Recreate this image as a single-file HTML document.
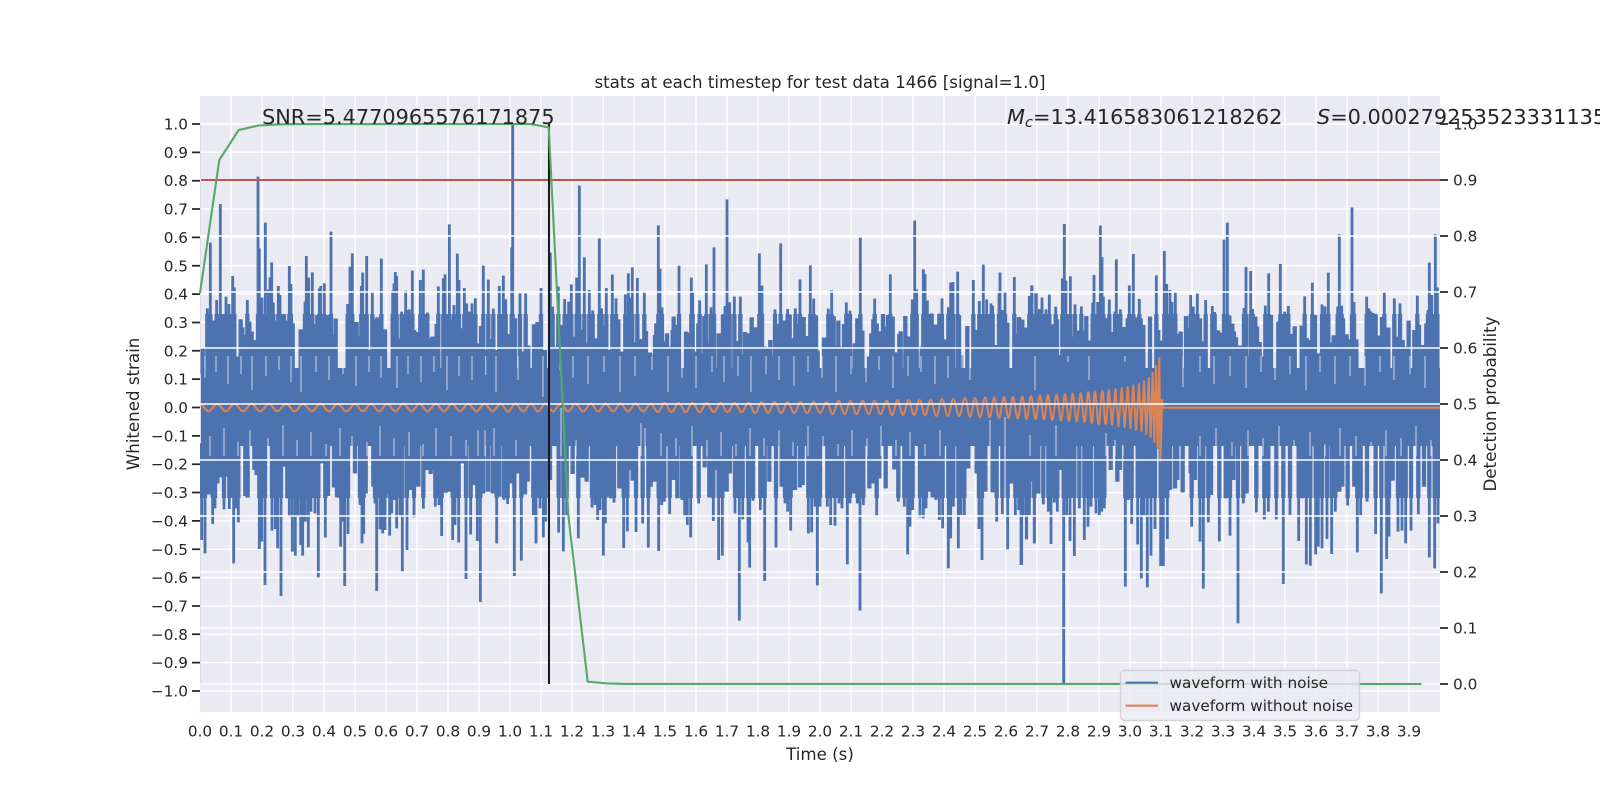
<!DOCTYPE html>
<html><head><meta charset="utf-8"><title>stats</title>
<style>
html,body{margin:0;padding:0;background:#fff;width:1600px;height:800px;overflow:hidden}
svg{display:block}
text{font-family:"DejaVu Sans","Liberation Sans",sans-serif;fill:#262626}
.t{font-size:15.28px}
.l{font-size:16.67px}
.b{font-size:20.83px}
.x text{text-anchor:middle}
.y text{text-anchor:end}
</style></head><body>
<svg width="1600" height="800" viewBox="0 0 1600 800" xmlns="http://www.w3.org/2000/svg">
<defs><clipPath id="c"><rect x="200" y="314" width="1240" height="60"/><rect x="200" y="442" width="1240" height="56"/></clipPath></defs>
<rect width="1600" height="800" fill="#fff"/>
<rect x="200" y="96" width="1240" height="616" fill="#eaeaf2"/>
<path fill="none" stroke="#fff" stroke-width="1.39" d="M231 96V712M262 96V712M293 96V712M324 96V712M355 96V712M386 96V712M417 96V712M448 96V712M479 96V712M510 96V712M541 96V712M572 96V712M603 96V712M634 96V712M665 96V712M696 96V712M727 96V712M758 96V712M789 96V712M820 96V712M851 96V712M882 96V712M913 96V712M944 96V712M975 96V712M1006 96V712M1037 96V712M1068 96V712M1099 96V712M1130 96V712M1161 96V712M1192 96V712M1223 96V712M1254 96V712M1285 96V712M1316 96V712M1347 96V712M1378 96V712M1409 96V712"/>
<path fill="none" stroke="#fff" stroke-width="1.39" d="M200 124H1440M200 152.35H1440M200 180.7H1440M200 209.05H1440M200 237.4H1440M200 265.75H1440M200 294.1H1440M200 322.45H1440M200 350.8H1440M200 379.15H1440M200 407.5H1440M200 435.85H1440M200 464.2H1440M200 492.55H1440M200 520.9H1440M200 549.25H1440M200 577.6H1440M200 605.95H1440M200 634.3H1440M200 662.65H1440M200 691H1440"/>
<rect x="200" y="124" width="1" height="560" fill="#dcdce6"/>
<!-- blue waveform -->
<rect x="201" y="368" width="1239" height="78" fill="#4c72b0"/>
<g fill="none" stroke="#4c72b0">
<g stroke-width="8.5">
<g id="wf">
<g transform="translate(200,130) scale(.33333)">
<path d="M8 730V655M22 730V535M31 730V338M42 730V572M50 730V510M61 730V222M68 730V552M78 730V500M87 730V522M98 730V438M103 730V472M110 730V680M122 730V568M127 730V592M133 730V615M142 730V510M148 730V575M155 730V605M165 730V630M174 730V140M178 730V355M186 730V503M196 730V278M205 730V478M210 730V442M215 730V397M220 730V518M230 730V572M235 730V468M240 730V495M252 730V552M262 730V572M268 730V408M273 730V462M278 730V580M302 730V598M310 730V600M315 730V515M319 730V378M326 730V443M337 730V427M345 730V582M352 730V555M358 730V475M362 730V468M373 730V460M381 730V555M393 730V305M400 730V615M407 730V566M443 730V522M450 730V410M457 730V370M464 730V640M470 730V576M477 730V620M484 730V468M488 730V428M493 730V570M500 730V378M510 730V660M517 730V485M525 730V568M532 730V562M540 730V575M544 730V386M555 730V598M578 730V482M582 730V460M586 730V426M590 730V438M598 730V625M605 730V545M612 730V600M617 730V482M622 730V540M628 730V538M637 730V422M643 730V600M650 730V606M661 730V450M670 730V419M675 730V600M682 730V548M690 730V625M697 730V620M710 730V582M715 730V469M730 730V445M735 730V433M742 730V570M748 730V283M755 730V570M762 730V525M772 730V371M777 730V450M785 730V595M793 730V474M800 730V520M808 730V545M816 730V520M826 730V505M838 730V640M843 730V588M850 730V407M857 730V660M865 730V449M871 730V628M880 730V536M890 730V660M898 730V468M910 730V437M917 730V508M928 730V612M935 730V352M938 730V-18M945 730V565M960 730V490M967 730V665M977 730V490M985 730V647M1002 730V583M1012 730V576M1023 730V474M1035 730V660M1051 730V368M1058 730V530M1068 730V650M1075 730V470M1082 730V585M1094 730V507M1106 730V515M1114 730V463M1121 730V620M1130 730V443M1138 730V167M1146 730V600M1153 730V382M1165 730V640M1168 730V480M1178 730V541M1186 730V625M1198 730V325M1205 730V535M1213 730V588M1219 730V474M1228 730V660M1237 730V434M1248 730V505M1255 730V568"/>
</g>
<g transform="translate(620,130) scale(.33333)">
<path d="M8 730V665M16 730V493M25 730V430M31 730V503M37 730V412M45 730V637M52 730V444M65 730V627M73 730V484M78 730V603M90 730V668M97 730V675M105 730V615M109 730V580M115 730V286M120 730V416M126 730V532M131 730V635M141 730V610M153 730V650M158 730V600M161 730V560M166 730V585M170 730V612M177 730V407M198 730V605M207 730V608M214 730V443M218 730V484M225 730V665M235 730V580M239 730V511M246 730V672M253 730V558M259 730V403M265 730V640M273 730V532M282 730V352M296 730V610M300 730V648M305 730V675M309 730V553M315 730V528M321 730V208M329 730V517M343 730V500M354 730V633M361 730V500M367 730V675M375 730V606M384 730V610M395 730V562M408 730V592M418 730V370M426 730V467M433 730V650M441 730V652M451 730V630M458 730V676M465 730V538M472 730V595M477 730V582M482 730V340M491 730V572M503 730V537M509 730V554M519 730V625M526 730V535M534 730V582M540 730V448M547 730V628M551 730V561M560 730V618M571 730V406M581 730V506M588 730V556M593 730V662M612 730V623M625 730V536M635 730V481M641 730V558M648 730V648M655 730V572M660 730V650M672 730V582M679 730V517M690 730V542M704 730V640M712 730V565M721 730V323M727 730V602M747 730V680M754 730V610M760 730V568M764 730V506M770 730V580M778 730V604M782 730V607M789 730V552M793 730V590M804 730V555M811 730V433M818 730V560M827 730V667M838 730V612M842 730V604M856 730V558M867 730V620M877 730V508M884 730V272M890 730V478M905 730V650M910 730V418M915 730V432M922 730V511M928 730V625M935 730V550M942 730V600M945 730V584M951 730V597M958 730V551M966 730V505M972 730V628M985 730V532M992 730V458M999 730V456M1013 730V425M1017 730V555M1023 730V677M1042 730V588M1060 730V450M1067 730V600M1078 730V513M1090 730V404M1100 730V508M1106 730V600M1113 730V520M1118 730V527M1130 730V645M1137 730V490M1140 730V428M1148 730V540M1155 730V483M1162 730V578M1183 730V441M1189 730V610M1197 730V561M1207 730V569M1216 730V593M1221 730V600M1229 730V498M1236 730V467M1249 730V490M1258 730V538"/>
</g>
<g transform="translate(1020,130) scale(.33333)">
<path d="M7 730V570M15 730V595M21 730V602M28 730V498M35 730V466M47 730V490M60 730V537M66 730V503M78 730V538M88 730V494M98 730V583M107 730V530M111 730V568M118 730V675M127 730V445M133 730V282M138 730V452M151 730V439M158 730V620M165 730V523M172 730V602M184 730V529M190 730V602M199 730V558M212 730V632M218 730V518M222 730V435M233 730V516M241 730V287M246 730V381M250 730V500M258 730V565M268 730V509M275 730V606M285 730V545M289 730V388M295 730V560M301 730V538M310 730V591M315 730V620M323 730V565M328 730V466M335 730V630M340 730V372M351 730V562M358 730V507M362 730V565M370 730V585M390 730V560M409 730V436M415 730V600M425 730V632M433 730V363M440 730V462M450 730V480M456 730V516M466 730V488M473 730V612M482 730V605M498 730V558M504 730V596M512 730V495M520 730V530M532 730V491M540 730V565M548 730V635M557 730V510M577 730V528M584 730V546M594 730V601M602 730V608M612 730V329M622 730V278M628 730V557M637 730V581M642 730V605M648 730V622M661 730V647M672 730V534M678 730V411M686 730V680M692 730V423M698 730V537M706 730V560M711 730V590M719 730V636M727 730V680M736 730V527M746 730V430M753 730V555M775 730V575M781 730V402M794 730V545M805 730V528M818 730V612M824 730V589M845 730V587M854 730V499M860 730V624M866 730V630M877 730V458M885 730V555M897 730V670M906 730V523M915 730V529M925 730V428M933 730V637M941 730V616M953 730V530M958 730V313M965 730V527M969 730V565M980 730V613M988 730V628M996 730V232M1002 730V516M1009 730V628M1040 730V500M1047 730V535M1053 730V544M1060 730V549M1067 730V552M1076 730V617M1086 730V561M1093 730V485M1105 730V593M1123 730V505M1131 730V620M1140 730V520M1148 730V630M1158 730V650M1166 730V572M1183 730V600M1192 730V497M1197 730V585M1210 730V645M1219 730V580M1224 730V540M1228 730V398M1235 730V495M1246 730V313M1252 730V472"/>
</g>
<g transform="translate(200,460) scale(.33333)">
<path d="M5 -50V240M15 -50V280M22 -50V100M28 -50V103M38 -50V192M45 -50V145M52 -50V70M60 -50V52M72 -50V148M80 -50V50M88 -50V147M95 -50V30M101 -50V310M107 -50V145M115 -50V187M136 -50V108M143 -50V113M163 -50V30M170 -50V45M178 -50V267M185 -50V245M195 -50V375M216 -50V212M226 -50V207M233 -50V265M243 -50V408M250 -50V20M262 -50V115M268 -50V170M277 -50V275M286 -50V287M293 -50V170M302 -50V255M308 -50V287M316 -50V185M325 -50V262M333 -50V155M345 -50V160M355 -50V352M366 -50V10M376 -50V233M384 -50V108M402 -50V82M411 -50V112M422 -50V260M428 -50V185M434 -50V378M444 -50V222M465 -50V40M480 -50V135M486 -50V250M491 -50V222M497 -50V100M520 -50V80M525 -50V130M530 -50V393M540 -50V208M548 -50V220M555 -50V210M562 -50V100M569 -50V227M575 -50V160M582 -50V120M590 -50V205M600 -50V165M607 -50V335M621 -50V270M630 -50V90M642 -50V172M655 -50V80M670 -50V146M680 -50V30M692 -50V42M700 -50V30M706 -50V140M717 -50V135M725 -50V228M737 -50V98M745 -50V95M758 -50V240M765 -50V195M776 -50V247M788 -50V10M798 -50V357M812 -50V223M820 -50V75M832 -50V243M841 -50V426M850 -50V100M864 -50V95M878 -50V100M890 -50V250M898 -50V110M912 -50V120M923 -50V132M930 -50V70M943 -50V348M955 -50V40M964 -50V302M975 -50V103M983 -50V65M1000 -50V165M1008 -50V250M1020 -50V145M1030 -50V232M1037 -50V185M1050 -50V60M1076 -50V218M1090 -50V274M1100 -50V165M1118 -50V42M1135 -50V235M1147 -50V53M1160 -50V65M1176 -50V143M1185 -50V135M1193 -50V180M1200 -50V150M1210 -50V287M1216 -50V190M1222 -50V110M1232 -50V115M1242 -50V128M1258 -50V85"/>
</g>
<g transform="translate(620,460) scale(.33333)">
<path d="M3 -50V85M11 -50V264M22 -50V214M30 -50V30M38 -50V62M48 -50V216M68 -50V190M85 -50V263M92 -50V80M103 -50V65M116 -50V273M125 -50V135M133 -50V125M149 -50V162M160 -50V60M172 -50V115M186 -50V120M194 -50V170M202 -50V195M212 -50V232M236 -50V130M254 -50V22M268 -50V112M280 -50V183M289 -50V30M296 -50V300M307 -50V287M320 -50V95M330 -50V40M345 -50V160M358 -50V482M368 -50V178M384 -50V247M389 -50V323M399 -50V122M421 -50V150M434 -50V363M448 -50V65M468 -50V263M485 -50V80M495 -50V130M503 -50V155M512 -50V212M525 -50V90M540 -50V82M548 -50V75M565 -50V220M575 -50V217M585 -50V140M592 -50V376M600 -50V140M622 -50V140M632 -50V195M645 -50V197M657 -50V130M666 -50V145M682 -50V313M690 -50V130M700 -50V100M712 -50V130M720 -50V452M730 -50V135M748 -50V85M760 -50V70M770 -50V167M778 -50V55M797 -50V85M823 -50V28M835 -50V125M853 -50V140M863 -50V283M870 -50V200M878 -50V150M900 -50V172M910 -50V175M918 -50V145M930 -50V95M938 -50V112M948 -50V120M958 -50V180M968 -50V205M985 -50V325M992 -50V235M1000 -50V140M1015 -50V265M1023 -50V165M1033 -50V165M1045 -50V25M1070 -50V40M1077 -50V207M1086 -50V300M1096 -50V95M1118 -50V97M1130 -50V185M1147 -50V162M1163 -50V268M1175 -50V70M1186 -50V165M1196 -50V150M1205 -50V315M1212 -50V80M1220 -50V237M1228 -50V165M1243 -50V250M1254 -50V100"/>
</g>
<g transform="translate(1020,460) scale(.33333)">
<path d="M3 -50V315M10 -50V165M19 -50V238M30 -50V65M43 -50V250M55 -50V100M70 -50V133M85 -50V155M93 -50V252M103 -50V128M112 -50V155M121 -50V30M131 -50V670M140 -50V165M150 -50V243M163 -50V288M178 -50V145M193 -50V240M204 -50V200M213 -50V140M228 -50V160M238 -50V165M245 -50V155M253 -50V145M272 -50V30M292 -50V65M300 -50V30M316 -50V380M325 -50V120M335 -50V192M353 -50V253M364 -50V355M372 -50V165M382 -50V382M393 -50V287M405 -50V207M422 -50V318M430 -50V318M442 -50V237M450 -50V90M465 -50V85M472 -50V60M488 -50V97M512 -50V40M515 -50V200M525 -50V60M540 -50V245M550 -50V386M565 -50V187M573 -50V105M598 -50V244M617 -50V115M630 -50V227M640 -50V60M654 -50V490M670 -50V130M680 -50V100M709 -50V157M733 -50V178M745 -50V155M769 -50V178M790 -50V372M810 -50V165M836 -50V243M847 -50V115M859 -50V313M871 -50V317M887 -50V283M895 -50V260M906 -50V265M921 -50V237M935 -50V282M946 -50V155M958 -50V95M967 -50V80M983 -50V137M1003 -50V80M1012 -50V277M1022 -50V165M1041 -50V125M1067 -50V222M1084 -50V400M1100 -50V297M1107 -50V230M1118 -50V62M1134 -50V215M1146 -50V212M1157 -50V250M1173 -50V212M1195 -50V163M1212 -50V80M1228 -50V292M1244 -50V325M1254 -50V190"/>
</g>
</g>
</g>
<use href="#wf" stroke-width="13" clip-path="url(#c)"/>
</g>
<!-- thin gaps inside the dense band -->
<path fill="none" stroke="#eaeaf2" stroke-opacity=".7" stroke-width="1.2" d="M205 356V378M216 356V372M228 356V384M241 356V374M252 356V390M266 356V376M279 356V370M291 356V382M301 356V392M316 356V372M329 356V380M343 356V374M356 356V386M369 356V372M381 356V378M397 356V388M408 356V374M421 356V382M434 356V372M447 356V390M459 356V376M472 356V380M485.7 356V375M496 356V392M518 356V380M543 356V397M560 356V370M573 356V378M588 356V384M604 356V372M620 356V392M635 356V376M652 356V370M668 356V392M682 356V378M696 356V388M712 356V372M724 356V382M738 356V376M751 356V392M766 356V374M779 356V380M794 356V386M808 356V372M822 356V378M836 356V392M851 356V374M866 356V382M879 356V370M893 356V388M908 356V376M921 356V372M935 356V384M948 356V378M962 356V368M970 356V380M1010 356V363M1035 356V390M1068 356V362M1089 356V380M1125 356V362M1183 356V387M1200 356V372M1214 356V384M1230 356V376M1246 356V388M1261 356V372M1275 356V380M1290 356V374M1306 356V390M1320 356V372M1335 356V384M1350 356V376M1365 356V386M1380 356V372M1394 356V380M1410 356V374M1425 356V388"/>
<path fill="none" stroke="#eaeaf2" stroke-opacity=".7" stroke-width="1.2" d="M210 456V436M224 456V428M238 456V442M250 456V430M268 456V438M283 456V425M297 456V440M311 456V432M326 456V444M340 456V428M352 456V436M367 456V442M380 456V426M394 456V438M409 456V432M423 456V444M436 456V428M451 456V436M466 456V440M478 456V430M485 456V430M494 456V428M516 456V440M561 456V408M576 456V440M641 456V423M645 456V428M661 456V433M676 456V438M692 456V426M707 456V440M721 456V432M736 456V444M750 456V428M764 456V438M779 456V430M793 456V442M808 456V426M823 456V436M838 456V444M852 456V430M867 456V438M881 456V426M896 456V440M910 456V432M925 456V444M940 456V430M990 456V420M1005 456V417M1030 456V435M1056 456V425M1106 456V433M1115 456V440M1123 456V445M1180 456V447M1200 456V436M1216 456V428M1232 456V442M1248 456V430M1263 456V438M1279 456V426M1294 456V440M1310 456V432M1325 456V444M1340 456V428M1356 456V436M1371 456V442M1386 456V430M1401 456V438M1416 456V426M1431 456V440"/>
<!-- orange waveform -->
<path fill="none" stroke="#dd8452" stroke-width="2.08" stroke-linejoin="round" d="M200 403.7c3.1 0 5.5 7.6 8.6 7.6
s5.5 -7.6 8.6 -7.6 s5.5 7.6 8.6 7.6 s5.5 -7.6 8.6 -7.6 s5.5 7.6 8.6 7.6 s5.5 -7.6 8.6 -7.6 s5.5 7.6 8.6 7.6 s5.5 -7.6 8.6 -7.6 s5.5 7.6 8.6 7.6
s5.5 -7.6 8.6 -7.6 s5.5 7.6 8.6 7.6 s5.5 -7.6 8.6 -7.6 s5.5 7.6 8.6 7.6 s5.5 -7.6 8.6 -7.6 s5.5 7.6 8.6 7.6 s5.5 -7.6 8.6 -7.6 s5.5 7.6 8.6 7.6
S352.5 403.7 354.8 403.7
S360.1 411.3 362.9 411.3 S368.2 403.7 371 403.7 S376.3 411.3 379.1 411.3 S384.4 403.7 387.2 403.7 S392.5 411.3 395.3 411.3 S400.6 403.7 403.4 403.7 S408.7 411.3 411.5 411.3 S416.8 403.7 419.6 403.7 S424.9 411.3 427.7 411.3 S433 403.7 435.8 403.7 S441.1 411.3 443.9 411.3 S449.2 403.7 452 403.7 S457.3 411.3 460.1 411.3 S465.4 403.7 468.2 403.7 S473.5 411.3 476.3 411.3 S481.6 403.7 484.4 403.7 S489.7 411.3 492.5 411.3 S497.8 403.7 500.6 403.7
S505.4 411.5 508.1 411.5 S512.9 403.5 515.6 403.5 S520.4 411.5 523.1 411.5 S527.9 403.5 530.6 403.5 S535.4 411.5 538.1 411.5 S542.9 403.5 545.6 403.5 S550.4 411.5 553.1 411.5 S557.9 403.5 560.6 403.5 S565.4 411.5 568.1 411.5 S572.9 403.5 575.6 403.5 S580.4 411.5 583.1 411.5 S587.9 403.5 590.6 403.5 S595.4 411.5 598.1 411.5 S602.9 403.5 605.6 403.5 S610.4 411.5 613.1 411.5 S617.9 403.5 620.6 403.5 S625.4 411.5 628.1 411.5 S632.9 403.5 635.6 403.5 S640.4 411.5 643.1 411.5 S647.9 403.5 650.6 403.5
S655.1 412.1 657.6 412.1 S662.1 402.9 664.6 402.9 S669.1 412.1 671.6 412.1 S676.1 402.9 678.6 402.9 S683.1 412.1 685.6 412.1 S690.1 402.9 692.6 402.9 S697.1 412.1 699.6 412.1 S704.1 402.9 706.6 402.9 S711.1 412.1 713.6 412.1 S718.1 402.9 720.6 402.9 S725.1 412.1 727.6 412.1 S732.1 402.9 734.6 402.9 S739.1 412.1 741.6 412.1 S746.1 402.9 748.6 402.9
S752.8 413 755.1 413 S759.3 402 761.6 402 S765.8 413 768.1 413 S772.3 402 774.6 402 S778.8 413 781.1 413 S785.3 402 787.6 402 S791.8 413 794.1 413 S798.3 402 800.6 402 S804.8 413 807.1 413 S811.3 402 813.6 402 S817.8 413 820.1 413 S824.3 402 826.6 402
S830.5 414 832.6 414 S836.5 401 838.6 401 S842.5 414 844.6 414 S848.5 401 850.6 401 S854.5 414 856.6 414 S860.5 401 862.6 401 S866.5 414 868.6 414 S872.5 401 874.6 401 S878.5 414 880.6 414 S884.5 401 886.6 401
S890.1 415 892.1 415 S895.6 400 897.6 400 S901.1 415 903.1 415 S906.6 400 908.6 400 S912.1 415 914.1 415 S917.6 400 919.6 400 S923.1 415 925.1 415 S928.6 400 930.6 400
S934.3 416 936.3 416 S940 399 942 399 S945.7 416 947.7 416 S951.4 399 953.4 399 S957.1 416 959.1 416 S962.9 398 965 398
S968.2 417 970 417 S973.2 398 975 398 S978.2 417.5 980 417.5 S983.2 397.5 985 397.5 S988 417.5 989.7 417.5 S992.6 397.5 994.3 397.5 S997.3 418 999 418 S1002.3 397 1004 397 S1006.9 418 1008.5 418 S1011.4 397 1013 397 S1016 418.5 1017.7 418.5 S1020.6 396.5 1022.3 396.5 S1025 419 1026.6 419 S1029.4 396 1031 396 S1033.9 419 1035.5 419 S1038.4 395.5 1040 395.5 S1042.6 419.5 1044 419.5 S1046.6 395 1048 395 S1050.8 420 1052.3 420 S1055.1 394.5 1056.7 394.5 S1059.5 420.5 1061 420.5 S1063.6 394 1065 394 S1067.6 421 1069 421 S1071.4 393.5 1072.7 393.5 S1075.3 421.5 1076.7 421.5 S1079.3 393 1080.7 393 S1083.1 422 1084.5 422 S1087 392 1088.3 392 S1090.5 423 1091.7 423 S1093.8 391.5 1095 391.5 S1097.4 424 1098.7 424 S1101 391 1102.3 391 S1104.5 424.5 1105.7 424.5 S1107.8 390 1109 390
L1112 425 1115.3 389 1118.5 426 1121.7 388 1124.7 427 1127.7 387 1130.5 428 1133.3 385.5 1136 430 1139 384 1141.5 431 1144 381 1146.3 434 1148.7 378 1150.7 437 1152.7 373 1154.3 442 1156 366 1157.7 448 1159.3 358 1160.5 461 1162 400 1163 407.7 1440 407.7"/>
<!-- second axis grid over waveform -->
<path fill="none" stroke="#fff" stroke-width="1.39" d="M200 124H1440M200 180H1440M200 236H1440M200 292H1440M200 348H1440M200 404H1440M200 460H1440M200 516H1440M200 572H1440M200 628H1440M200 684H1440"/>
<path fill="none" stroke="#c44e52" stroke-width="2.08" d="M201 180H1440"/>
<path fill="none" stroke="#1a1a1a" stroke-width="2.08" d="M549 124V684"/>
<path fill="none" stroke="#55a868" stroke-width="2.08" stroke-linejoin="round" d="M200 293L219.3 160 238.7 130 258.7 125.5 278 124.4 297 124.1 530 124 548.7 127.3 568.3 515 587.7 681.7 607 683.4 626 683.9 1421.5 684"/>
<!-- ticks -->
<path fill="none" stroke="#262626" stroke-width="1.74" d="M192 124H200M192 152.35H200M192 180.7H200M192 209.05H200M192 237.4H200M192 265.75H200M192 294.1H200M192 322.45H200M192 350.8H200M192 379.15H200M192 407.5H200M192 435.85H200M192 464.2H200M192 492.55H200M192 520.9H200M192 549.25H200M192 577.6H200M192 605.95H200M192 634.3H200M192 662.65H200M192 691H200M1440 124H1448M1440 180H1448M1440 236H1448M1440 292H1448M1440 348H1448M1440 404H1448M1440 460H1448M1440 516H1448M1440 572H1448M1440 628H1448M1440 684H1448"/>
<g class="y t">
<text x="188" y="129.5">1.0</text><text x="188" y="157.9">0.9</text><text x="188" y="186.2">0.8</text><text x="188" y="214.6">0.7</text><text x="188" y="242.9">0.6</text><text x="188" y="271.3">0.5</text><text x="188" y="299.6">0.4</text><text x="188" y="328">0.3</text><text x="188" y="356.3">0.2</text><text x="188" y="384.7">0.1</text><text x="188" y="413">0.0</text><text x="188" y="441.4">−0.1</text><text x="188" y="469.7">−0.2</text><text x="188" y="498.1">−0.3</text><text x="188" y="526.4">−0.4</text><text x="188" y="554.8">−0.5</text><text x="188" y="583.1">−0.6</text><text x="188" y="611.5">−0.7</text><text x="188" y="639.8">−0.8</text><text x="188" y="668.2">−0.9</text><text x="188" y="696.5">−1.0</text>
</g>
<g class="t">
<text x="1453" y="129.5">1.0</text><text x="1453" y="185.5">0.9</text><text x="1453" y="241.5">0.8</text><text x="1453" y="297.5">0.7</text><text x="1453" y="353.5">0.6</text><text x="1453" y="409.5">0.5</text><text x="1453" y="465.5">0.4</text><text x="1453" y="521.5">0.3</text><text x="1453" y="577.5">0.2</text><text x="1453" y="633.5">0.1</text><text x="1453" y="689.5">0.0</text>
</g>
<g class="x t">
<text x="200" y="736.5">0.0</text><text x="231" y="736.5">0.1</text><text x="262" y="736.5">0.2</text><text x="293" y="736.5">0.3</text><text x="324" y="736.5">0.4</text><text x="355" y="736.5">0.5</text><text x="386" y="736.5">0.6</text><text x="417" y="736.5">0.7</text><text x="448" y="736.5">0.8</text><text x="479" y="736.5">0.9</text><text x="510" y="736.5">1.0</text><text x="541" y="736.5">1.1</text><text x="572" y="736.5">1.2</text><text x="603" y="736.5">1.3</text><text x="634" y="736.5">1.4</text><text x="665" y="736.5">1.5</text><text x="696" y="736.5">1.6</text><text x="727" y="736.5">1.7</text><text x="758" y="736.5">1.8</text><text x="789" y="736.5">1.9</text><text x="820" y="736.5">2.0</text><text x="851" y="736.5">2.1</text><text x="882" y="736.5">2.2</text><text x="913" y="736.5">2.3</text><text x="944" y="736.5">2.4</text><text x="975" y="736.5">2.5</text><text x="1006" y="736.5">2.6</text><text x="1037" y="736.5">2.7</text><text x="1068" y="736.5">2.8</text><text x="1099" y="736.5">2.9</text><text x="1130" y="736.5">3.0</text><text x="1161" y="736.5">3.1</text><text x="1192" y="736.5">3.2</text><text x="1223" y="736.5">3.3</text><text x="1254" y="736.5">3.4</text><text x="1285" y="736.5">3.5</text><text x="1316" y="736.5">3.6</text><text x="1347" y="736.5">3.7</text><text x="1378" y="736.5">3.8</text><text x="1409" y="736.5">3.9</text>
</g>
<text class="l" x="820" y="88" text-anchor="middle">stats at each timestep for test data 1466 [signal=1.0]</text>
<text class="l" x="820" y="760" text-anchor="middle">Time (s)</text>
<text class="l" transform="translate(139,404) rotate(-90)" text-anchor="middle">Whitened strain</text>
<text class="l" transform="translate(1496,404) rotate(-90)" text-anchor="middle">Detection probability</text>
<text class="b" x="262" y="124">SNR=5.4770965576171875</text>
<text class="b" x="1007" y="124"><tspan font-style="italic">M</tspan><tspan font-style="italic" font-size="14.6" dy="3">c</tspan><tspan dy="-3">=13.416583061218262</tspan></text>
<text class="b" x="1317" y="124"><tspan font-style="italic">S</tspan>=0.000279253523331135</text>
<!-- legend -->
<rect x="1120.5" y="670.5" width="239" height="50" rx="4" fill="#eaeaf2" fill-opacity=".8" stroke="#ccc" stroke-opacity=".8" stroke-width="1.39"/>
<path fill="none" stroke="#4c72b0" stroke-width="2.08" d="M1125.5 682.7H1158"/>
<path fill="none" stroke="#dd8452" stroke-width="2.08" d="M1125.5 705.7H1158"/>
<text class="t" x="1169.5" y="688">waveform with noise</text>
<text class="t" x="1169.5" y="711">waveform without noise</text>
</svg>
</body></html>
